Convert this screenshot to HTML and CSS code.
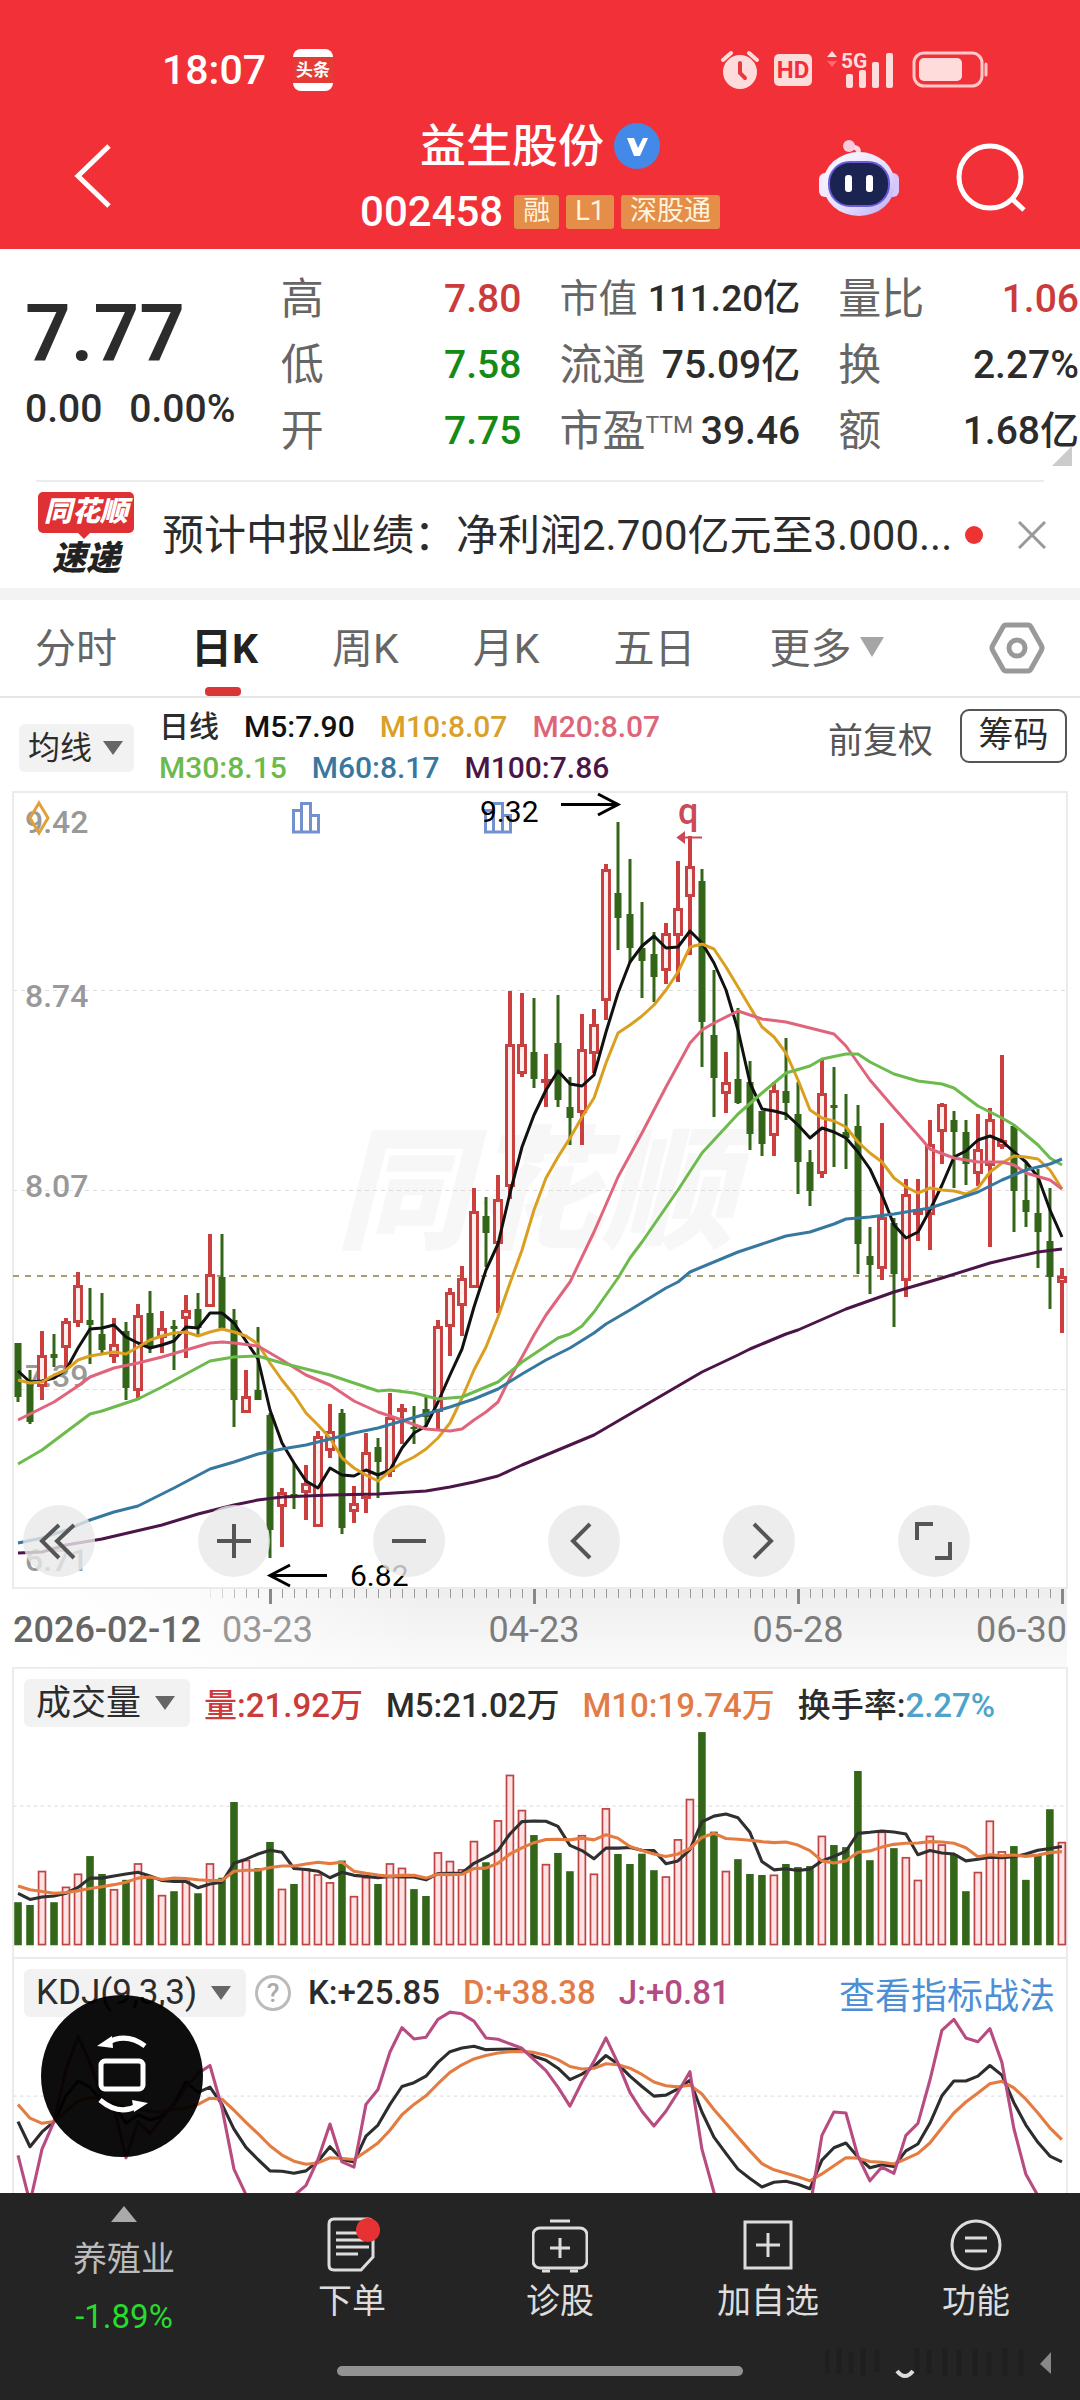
FILE: index.html
```html
<!DOCTYPE html>
<html lang="zh-CN">
<head>
<meta charset="utf-8">
<meta name="viewport" content="width=device-width, initial-scale=1">
<title>益生股份 002458</title>
<link rel="stylesheet" href="styles.css">
</head>
<body>
<header class="top">
  <div class="status">
    <span class="status-time">18:07</span>
    <span class="status-app"><span>头条</span></span>
    <div class="status-icons">
      <svg width="38" height="40" viewBox="0 0 38 40" aria-label="闹钟"><circle cx="19" cy="22" r="17" fill="#ffdcdc"/><path d="M2 10 10 3M36 10 28 3" stroke="#ffdcdc" stroke-width="4" stroke-linecap="round"/><path d="M19 13v10l5 5" stroke="#e8393f" stroke-width="4" fill="none" stroke-linecap="round"/></svg>
      <span class="hd">HD</span>
      <svg class="signal" width="70" height="40" viewBox="0 0 70 40" aria-label="5G"><path d="M0 7 5 1l5 6z" fill="#ffdcdc"/><path d="M0 11h10l-5 6z" fill="#ff6a6e"/><text x="14" y="18" font-size="21" font-weight="700" fill="#ffdcdc">5G</text><g fill="#ffdcdc"><rect x="19" y="24" width="7" height="14" rx="2"/><rect x="32" y="20" width="7" height="18" rx="2"/><rect x="45" y="12" width="7" height="26" rx="2"/><rect x="59" y="3" width="7" height="35" rx="2"/></g></svg>
      <svg width="78" height="38" viewBox="0 0 78 38" aria-label="电量"><rect x="2" y="2" width="68" height="33" rx="10" fill="none" stroke="#ffc9ca" stroke-width="3"/><rect x="7" y="7" width="43" height="23" rx="5" fill="#ffdcdc"/><path d="M74 13v11" stroke="#ffc9ca" stroke-width="3" stroke-linecap="round"/></svg>
    </div>
  </div>
  <div class="nav">
    <button class="icon-btn back" aria-label="返回"><svg width="38" height="64" viewBox="0 0 38 64"><path d="M35 2 4 32l31 30" fill="none" stroke="#fff" stroke-width="5"/></svg></button>
    <div class="title">
      <h1>益生股份 <svg width="46" height="46" viewBox="0 0 46 46" aria-label="认证"><circle cx="23" cy="23" r="23" fill="#4389e8"/><path d="M13 15h7l4 10 5-10h5l-8 18h-6z" fill="#fff"/></svg></h1>
      <div class="code"><span class="code-num">002458</span><span class="tag">融</span><span class="tag">L1</span><span class="tag">深股通</span></div>
    </div>
    <div class="nav-actions">
      <button class="icon-btn" aria-label="助手"><svg width="82" height="78" viewBox="0 0 82 78">
        <defs><linearGradient id="shell" x1="0" y1="0" x2="1" y2="1"><stop offset="0" stop-color="#fff"/><stop offset=".6" stop-color="#e3dcff"/><stop offset="1" stop-color="#b9a5f2"/></linearGradient></defs>
        <path d="M39 17c3-7 1-8-5-9" fill="none" stroke="#f7d9ea" stroke-width="5"/><circle cx="31" cy="7" r="6" fill="#f9c9dc"/>
        <rect x="1" y="34" width="12" height="24" rx="6" fill="#f3eaff"/><rect x="69" y="34" width="12" height="24" rx="6" fill="#d6c8fb"/>
        <ellipse cx="41" cy="45" rx="36" ry="32" fill="url(#shell)"/><rect x="11" y="23" width="60" height="44" rx="21" fill="#1b2450" stroke="#6a5bd8" stroke-width="2"/>
        <rect x="27" y="36" width="7" height="17" rx="3" fill="#fff"/><rect x="48" y="36" width="7" height="17" rx="3" fill="#fff"/></svg></button>
      <button class="icon-btn" aria-label="搜索"><svg width="72" height="70" viewBox="0 0 72 70"><circle cx="36" cy="34" r="31" fill="none" stroke="#fff" stroke-width="5"/><path d="m57 55 13 12" stroke="#fff" stroke-width="5"/></svg></button>
    </div>
  </div>
</header>

<main>
  <section class="quote">
    <div class="price"><strong>7.77</strong><div><span>0.00</span><span>0.00%</span></div></div>
    <dl class="stats">
      <div><dt>高</dt><dd class="up">7.80</dd></div>
      <div><dt>低</dt><dd class="down">7.58</dd></div>
      <div><dt>开</dt><dd class="down">7.75</dd></div>
    </dl>
    <dl class="stats">
      <div><dt class="tight">市值</dt><dd class="long">111.20亿</dd></div>
      <div><dt>流通</dt><dd>75.09亿</dd></div>
      <div><dt>市盈<sup>TTM</sup></dt><dd>39.46</dd></div>
    </dl>
    <dl class="stats">
      <div><dt>量比</dt><dd class="up">1.06</dd></div>
      <div><dt>换</dt><dd>2.27%</dd></div>
      <div><dt>额</dt><dd>1.68亿</dd></div>
    </dl>
    <span class="corner"></span>
  </section>

  <section class="notice">
    <div class="brand"><span class="brand-top">同花顺</span><span class="brand-bottom">速递</span></div>
    <a href="#" class="notice-text">预计中报业绩：净利润2.700亿元至3.000...</a>
    <span class="dot"></span>
    <button class="icon-btn" aria-label="关闭"><svg width="28" height="28" viewBox="0 0 28 28"><path d="m1 1 26 26M27 1 1 27" stroke="#999" stroke-width="3"/></svg></button>
  </section>

  <nav class="tabs">
    <button>分时</button>
    <button class="active">日K</button>
    <button>周K</button>
    <button>月K</button>
    <button>五日</button>
    <button aria-haspopup="menu">更多<i class="caret"></i></button>
    <button class="gear" aria-label="设置"><svg width="56" height="52" viewBox="0 0 56 52"><path d="M17 3h22q2 0 3 2l10 18q2 3 0 6L42 47q-1 2-3 2H17q-2 0-3-2L4 29q-2-3 0-6L14 5q1-2 3-2z" fill="none" stroke="#999" stroke-width="5"/><circle cx="28" cy="26" r="8" fill="none" stroke="#999" stroke-width="5"/></svg></button>
  </nav>

  <section class="ma-bar">
    <label class="picker small"><select aria-label="主图指标"><option>均线</option></select></label>
    <div class="ma-legend">
      <div><span>日线</span><span class="m5">M5:7.90</span><span class="m10">M10:8.07</span><span class="m20">M20:8.07</span></div>
      <div><span class="m30">M30:8.15</span><span class="m60">M60:8.17</span><span class="m100">M100:7.86</span></div>
    </div>
    <button class="plain">前复权</button>
    <button class="outlined">筹码</button>
  </section>

  <section class="chart">
    <svg id="kline" viewBox="0 790 1080 877" role="img" aria-label="日K线图">
      <defs>
        <linearGradient id="axisV" x1="0" y1="0" x2="0" y2="1"><stop offset="0" stop-color="#eeeeee"/><stop offset="1" stop-color="#fafafa"/></linearGradient>
        <linearGradient id="axisH" x1="0" y1="0" x2="1" y2="0"><stop offset="0" stop-color="#fff"/><stop offset=".18" stop-color="#fff" stop-opacity=".8"/><stop offset=".4" stop-color="#fff" stop-opacity="0"/></linearGradient>
      </defs>
      <text class="watermark" x="336" y="1238">同花顺</text>
      <rect x="0" y="1588" width="1067" height="79" fill="url(#axisV)"/>
      <rect x="0" y="1588" width="1067" height="79" fill="url(#axisH)"/>
      <path class="grid" d="M13 990.5H1067M13 1190.5H1067M13 1389.5H1067"/>
      <rect class="frame" x="13" y="792" width="1054" height="796"/>
      <path class="last-price" d="M13 1276H1067"/>
      <g class="axis">
        <text x="25" y="833">9.42</text><text x="25" y="1007">8.74</text><text x="25" y="1197">8.07</text><text x="25" y="1387">7.39</text><text x="25" y="1571">6.71</text>
      </g>
      <path d="M39 803 48 818 39 833 30 818z" fill="none" stroke="#e0a13c" stroke-width="3"/>
      <g fill="none" stroke="#7390cf" stroke-width="3"><path id="bars" d="M293.500 832V810.500H301.500V832M301.500 832V803.500H310.500V832M310.500 832V815.500H318.500V832M292 832H320"/><use href="#bars" x="192"/></g>
      <g id="ticks"></g>
      <g id="candles"></g>
      <g id="mas"></g>
      <g class="mark"><text x="480" y="822">9.32</text><text x="350" y="1586">6.82</text>
        <path d="M561 804.500H618M598 794 618 804.500 598 815M327 1575.500H270M290 1565 270 1575.500 290 1586"/></g>
      <text x="678" y="824" class="q">q</text><path d="M702 837.500H682M684 833 678 837.500 684 842z" stroke="#cb4a58" stroke-width="2" fill="#cb4a58"/>
      <g class="dates"><text class="from" x="13" y="1642">2026-02-12</text><text class="faded" x="222" y="1642">03-23</text><text x="534" y="1642" text-anchor="middle">04-23</text><text x="798" y="1642" text-anchor="middle">05-28</text><text x="1067" y="1642" text-anchor="end">06-30</text></g>
    </svg>
    <div class="tools">
      <button aria-label="最早"><svg viewBox="0 0 72 72"><path d="M36 20 19 36l17 17M51 20 34 36l17 17"/></svg></button>
      <button aria-label="放大"><svg viewBox="0 0 72 72"><path d="M36 19v34M19 36h34"/></svg></button>
      <button aria-label="缩小"><svg viewBox="0 0 72 72"><path d="M19 36h34"/></svg></button>
      <button aria-label="向左"><svg viewBox="0 0 72 72"><path d="M42 19 25 36l17 17"/></svg></button>
      <button aria-label="向右"><svg viewBox="0 0 72 72"><path d="m31 19 17 17-17 17"/></svg></button>
      <button aria-label="全屏"><svg viewBox="0 0 72 72"><path d="M19 35V19h16M52 37v16H37"/></svg></button>
    </div>
  </section>

  <section class="sub">
    <svg id="volume" viewBox="0 20 3136 842" role="img" aria-label="成交量"><path class="frame" d="M38 862V22H3098V862"/><path class="grid" d="M38 424H3098"/></svg>
    <div class="sub-head">
      <label class="picker"><select aria-label="副图一"><option>成交量</option></select></label>
      <span class="up">量:21.92万</span><span>M5:21.02万</span><span class="orange">M10:19.74万</span><span>换手率:<b class="cyan">2.27%</b></span>
    </div>
  </section>

  <section class="sub">
    <svg id="kdj" viewBox="0 862 3136 686" role="img" aria-label="KDJ"><path class="frame" d="M38 1548V865H3098V1548"/><path class="grid" d="M38 1266H3098"/></svg>
    <div class="sub-head">
      <label class="picker wide"><select aria-label="副图二"><option>KDJ(9,3,3)</option></select></label>
      <button class="help" aria-label="说明">?</button>
      <span>K:+25.85</span><span class="orange">D:+38.38</span><span class="magenta">J:+0.81</span>
      <a href="#">查看指标战法</a>
    </div>
    <button class="rotate" aria-label="横屏"><svg width="60" height="84" viewBox="0 0 60 84"><g fill="none" stroke="#fff" stroke-width="5"><rect x="9" y="27" width="42" height="28" rx="4"/><path d="M53 12Q34-2 15 9"/><path d="M8 66Q27 82 45 72"/></g><path d="M5 12 20 2 21 14zM56 69 40 66 42 78z" fill="#fff"/></svg></button>
  </section>
</main>

<footer class="bottom">
  <div class="bar">
    <button class="sector"><i></i><span>养殖业</span><b>-1.89%</b></button>
    <button><svg width="56" height="56" viewBox="0 0 56 56"><path d="M10 2h34q5 0 5 5v33L37 53H10q-5 0-5-5V7q0-5 5-5z"/><path d="M12 16h28M12 23h28M12 30h33M12 37h22"/><circle cx="44" cy="13" r="12" class="badge"/></svg><span>下单</span></button>
    <button><svg width="56" height="56" viewBox="0 0 56 56"><rect x="1" y="11" width="54" height="40" rx="7"/><path d="M18 4h20M28 21v20M18 31h20M10 54h8M38 54h8"/></svg><span>诊股</span></button>
    <button><svg width="56" height="56" viewBox="0 0 56 56"><rect x="5" y="5" width="46" height="46"/><path d="M28 16v24M16 28h24"/></svg><span>加自选</span></button>
    <button><svg width="56" height="56" viewBox="0 0 56 56"><circle cx="28" cy="28" r="24"/><path d="M17 21h22M17 34h22"/></svg><span>功能</span></button>
  </div>
  <div class="home"></div>
  <svg class="smudge" width="232" height="36" viewBox="0 0 232 36" aria-hidden="true"><path d="M2 6v24M14 4v26M26 8v22M38 4v28M52 6v22M92 4v26M104 6v24M120 4v28M134 6v26M150 5v27M164 8v24M180 4v28M196 6v26" stroke="#1f1f1f" stroke-width="5"/><path d="M72 27q8 10 16 0" stroke="#ddd" stroke-width="4" fill="none"/><path d="m226 8-11 12 11 10z" fill="#888"/></svg>
</footer>
<script src="chart.js"></script>
</body>
</html>
```
FILE: styles.css
```css
* { box-sizing: border-box; }
body { margin: 0; background: #fff; color: #2c2c2c; font-family: Roboto, "Noto Sans CJK SC", sans-serif; font-size: 34px; }
button, select { font: inherit; color: inherit; background: none; border: 0; padding: 0; margin: 0; }
a { color: inherit; text-decoration: none; }
svg { display: block; }
.icon-btn { flex: none; }
.up { color: #cb3b3b; }
.down { color: #158a15; }
.orange { color: #e27b46; }
.cyan { color: #4da3cb; }
.magenta { color: #b34c80; }

/* header */
.top { background: #f23037; color: #fff; height: 249px; }
.status { display: flex; align-items: center; padding: 42px 90px 0 162px; height: 98px; }
.status-time { font-size: 41px; font-weight: 500; }
.status-app { margin-left: 27px; width: 40px; height: 42px; border-radius: 8px; background: #fff; display: flex; align-items: center; }
.status-app span { width: 100%; height: 26px; line-height: 26px; background: #e33b35; font-size: 17px; text-align: center; font-weight: 700; }
.status-icons { margin-left: auto; display: flex; align-items: center; gap: 15px; }
.signal { overflow: visible; }
.hd { width: 38px; height: 32px; border-radius: 5px; background: #ffdcdc; color: #f23037; font-size: 24px; line-height: 32px; font-weight: 700; text-align: center; }
.nav { display: grid; grid-template-columns: 1fr auto 1fr; align-items: center; padding: 0 54px; height: 151px; }
.title { padding-top: 10px; }
.title h1 { margin: 0; display: flex; align-items: center; justify-content: center; gap: 10px; font-size: 46px; line-height: 60px; font-weight: 500; }
.code { display: flex; align-items: center; gap: 7px; height: 66px; padding-top: 6px; }
.code-num { font-size: 42px; font-weight: 500; margin-right: 4px; }
.tag { height: 34px; line-height: 33px; padding: 0 9px; border-radius: 3px; background: #e48e4a; color: #fff3dc; font-size: 27px; }
.nav-actions { display: flex; gap: 54px; justify-content: flex-end; align-items: center; padding-top: 8px; }
.back { justify-self: start; padding: 4px 0 0 20px; }

/* quote */
.quote { position: relative; display: grid; grid-template-columns: 217fr 240fr 240fr 240fr; gap: 38px; height: 231px; padding: 17px 1px 0 25px; }
.price strong { display: block; margin-top: 16px; font-size: 80px; line-height: 104px; font-weight: 600; }
.price div { display: flex; gap: 27px; margin-top: -2px; font-size: 39px; line-height: 50px; font-weight: 500; }
.stats { margin: 0; }
.stats div { display: flex; justify-content: space-between; align-items: center; height: 66px; white-space: nowrap; }
.stats dt { font-size: 43px; line-height: 60px; color: #666; }
.stats .tight { font-size: 39px; }
.stats sup { font-size: 23px; line-height: 20px; vertical-align: 13px; }
.stats dd { margin: 0; font-size: 39px; line-height: 60px; font-weight: 500; }
.stats .long { font-size: 37px; }
.corner { position: absolute; right: 8px; bottom: 14px; border-left: 20px solid transparent; border-bottom: 20px solid #ccc; }

/* notice */
.notice { position: relative; display: flex; align-items: center; height: 120px; padding: 2px 34px 10px 37px; border-bottom: 12px solid #f3f3f3; }
.notice::before { content: ""; position: absolute; top: 0; left: 36px; right: 36px; border-top: 2px solid #ececec; }
.brand { width: 98px; margin-right: 27px; padding-top: 10px; display: flex; flex-direction: column; align-items: center; font-weight: 900; font-style: italic; }
.brand-top { position: relative; width: 96px; height: 41px; line-height: 40px; border-radius: 5px; background: #df3033; color: #fff; font-size: 28px; text-align: center; }
.brand-top::after { content: ""; position: absolute; left: 40px; top: 41px; border: 6px solid transparent; border-top-color: #df3033; border-bottom: 0; }
.brand-bottom { font-size: 34px; line-height: 42px; color: #222; margin-top: 4px; }
.notice-text { flex: 1; font-size: 42px; line-height: 60px; white-space: nowrap; padding-top: 12px; }
.dot { width: 18px; height: 18px; border-radius: 9px; background: #e33; margin: 10px 35px 0 0; }
.notice .icon-btn { padding-top: 10px; }

/* tabs */
.tabs { display: flex; align-items: center; gap: 74px; height: 98px; padding: 0 35px; border-bottom: 2px solid #e5e5e5; color: #666; }
.tabs button { position: relative; height: 96px; font-size: 41px; line-height: 98px; white-space: nowrap; }
.tabs .gear { margin-left: auto; }
.tabs .active { color: #222; font-weight: 700; }
.tabs .active::after { content: ""; position: absolute; left: 50%; bottom: 0; width: 36px; height: 9px; margin-left: -20px; border-radius: 4px; background: #d93636; }
.caret { display: inline-block; margin-left: 8px; vertical-align: 6px; border: 12px solid transparent; border-top: 20px solid #a5a5a5; border-bottom: 0; }

/* moving averages */
.ma-bar { display: flex; align-items: flex-start; height: 92px; padding: 0 13px 0 19px; }
.picker { position: relative; display: block; width: 166px; height: 48px; border-radius: 6px; background: #f2f2f2; }
.picker select { width: 100%; height: 100%; padding-left: 12px; appearance: none; font-size: 35px; }
.picker::after { content: ""; position: absolute; right: 15px; top: 17px; border: 10px solid transparent; border-top: 14px solid #666; border-bottom: 0; pointer-events: none; }
.picker.small { width: 115px; margin-top: 26px; }
.picker.small select { font-size: 32px; padding-left: 9px; }
.picker.small::after { right: 11px; }
.picker.wide { width: 222px; }
.ma-legend { flex: 1; margin: 8px 0 0 25px; font-size: 30px; line-height: 41px; font-weight: 500; }
.ma-legend div { display: flex; gap: 25px; }
.m5 { color: #111; } .m10 { color: #d9a02a; } .m20 { color: #de6478; } .m30 { color: #6cba4c; } .m60 { color: #38779f; } .m100 { color: #4a1648; }
.plain { margin: 18px 27px 0 0; font-size: 35px; line-height: 52px; color: #555; }
.outlined { margin-top: 11px; width: 107px; height: 54px; border: 2px solid #555; border-radius: 9px; font-size: 35px; line-height: 50px; }

/* main chart */
.chart { position: relative; }
.chart > svg, .sub > svg { width: 100%; height: auto; }
#kline { overflow: visible; }
.frame { fill: none; stroke: #ebebeb; stroke-width: 2; }
.grid { fill: none; stroke: #ddd; stroke-width: 1; stroke-dasharray: 4 4; }
.last-price { stroke: #a8a06c; stroke-width: 2; stroke-dasharray: 6 6; }
.watermark { font-size: 133px; font-weight: 900; font-style: italic; fill: #f7f7f7; }
.axis { font-size: 32px; font-weight: 500; fill: #999; }
.mark { font-size: 30px; fill: #000; }
.mark path { fill: none; stroke: #000; stroke-width: 3; }
.q { font-size: 36px; font-weight: 500; fill: #cb4a58; }
.dates { font-size: 36px; fill: #7c7c7c; }
.dates .from { fill: #666; font-weight: 500; }
.dates .faded { fill: #999; }
.wick-r { stroke: #cd3f3f; stroke-width: 4; }
.wick-g { stroke: #34661a; stroke-width: 3; }
.body-r { fill: #fff0f0; stroke: #c84141; stroke-width: 3; }
.body-g { fill: #34661a; }
.vol-r { fill: #ffe2e3; stroke: #bf4444; stroke-width: 5; }
.vol-g { fill: #34661a; }
.line { fill: none; stroke-width: 3; stroke-linejoin: round; }
.tools { position: absolute; left: 23px; right: 110px; bottom: 90px; display: flex; justify-content: space-between; }
.tools button { width: 72px; height: 72px; border-radius: 36px; background: rgba(233, 233, 233, 0.8); }
.tools path { fill: none; stroke: #555; stroke-width: 4; }

/* sub charts */
.sub { position: relative; display: grid; }
.sub > svg, .sub-head { grid-area: 1 / 1; }
.sub .frame { stroke-width: 6; }
.sub .grid { stroke-width: 4; stroke-dasharray: 10 10; stroke: #e2e2e2; }
.sub .line { stroke-width: 9; }
.sub-head { display: flex; align-self: start; align-items: center; gap: 23px; padding: 12px 25px 0 24px; height: 60px; font-size: 33px; font-weight: 500; white-space: nowrap; }
.sub-head .picker { font-weight: 400; margin-right: -9px; }
.sub-head b { font-weight: 500; }
.sub-head a { margin-left: auto; font-size: 36px; font-weight: 400; color: #4c8fd6; }
.help { width: 36px; height: 36px; border: 3px solid #bbb; border-radius: 18px; color: #aaa; font-size: 26px; line-height: 30px; margin: 0 -6px 0 -5px; }
.rotate { position: absolute; left: 41px; top: 38px; width: 162px; height: 162px; border-radius: 81px; background: rgba(0, 0, 0, 0.95); display: grid; place-items: center; }

/* bottom bar */
.bottom { position: relative; background: #242424; color: #ddd; height: 207px; }
.bar { display: grid; grid-template-columns: 248fr 208fr 208fr 208fr 208fr; height: 150px; }
.bar button { display: flex; flex-direction: column; align-items: center; padding-top: 24px; font-size: 34px; line-height: 50px; }
.bar button span { margin-top: 3px; }
.bar svg { fill: none; stroke: #ddd; stroke-width: 3; }
.bar .badge { fill: #e63232; stroke: none; }
.bar .sector { padding-top: 13px; }
.sector i { border: 13px solid transparent; border-bottom: 16px solid #aaa; border-top: 0; }
.bar .sector span { margin-top: 12px; color: #bbb; }
.sector b { margin-top: 8px; font-size: 33px; font-weight: 400; color: #26dc2c; }
.home { width: 406px; height: 10px; margin: 23px auto 0; border-radius: 5px; background: #929292; }
.smudge { position: absolute; right: 23px; bottom: 20px; }
```
FILE: chart.js
```js
// Each candle: direction, high, body top, body bottom, low (chart units).
const candles = `g 1343 1343 1397 1402|g 1370 1380 1422 1424|r 1331 1355 1387 1400|g 1334 1354 1358 1367|r 1318 1321 1348 1367|r 1272 1285 1323 1327|g 1288 1320 1325 1364|g 1293 1334 1350 1353|r 1318 1344 1357 1363|g 1322 1331 1388 1400|r 1304 1315 1391 1400|g 1291 1313 1348 1353|r 1311 1328 1338 1353|g 1320 1326 1329 1370|r 1295 1310 1319 1358|g 1293 1309 1328 1335|r 1234 1274 1307 1307|g 1234 1277 1328 1328|g 1309 1320 1400 1427|r 1370 1396 1413 1413|g 1327 1390 1400 1400|g 1413 1415 1530 1558|r 1488 1492 1507 1547|g 1463 1494 1496 1509|r 1465 1483 1493 1520|r 1431 1436 1527 1527|r 1404 1431 1451 1458|g 1409 1413 1528 1534|r 1486 1503 1512 1523|r 1433 1452 1499 1513|g 1438 1447 1462 1498|r 1393 1417 1472 1477|r 1404 1408 1411 1444|g 1406 1427 1429 1444|g 1395 1409 1417 1427|r 1320 1326 1412 1430|r 1288 1292 1327 1356|r 1266 1278 1306 1336|r 1188 1211 1288 1288|g 1197 1216 1233 1267|r 1175 1199 1244 1313|r 991 1044 1187 1199|r 993 1044 1074 1077|g 998 1052 1079 1088|r 1054 1079 1083 1107|g 995 1043 1100 1107|g 1077 1107 1118 1145|r 1014 1049 1113 1145|r 1009 1024 1054 1073|r 864 869 1001 1020|g 822 893 918 950|g 859 914 948 963|g 902 948 961 998|g 932 954 977 1002|r 923 933 971 984|r 861 908 936 982|r 836 866 897 955|g 869 881 1022 1067|g 970 1035 1078 1117|r 1052 1082 1094 1113|g 1008 1079 1103 1104|g 1061 1082 1134 1150|g 1111 1111 1144 1156|r 1082 1090 1136 1156|g 1038 1091 1103 1120|g 1082 1114 1162 1194|g 1150 1162 1191 1206|r 1059 1093 1174 1178|g 1067 1105 1108 1167|g 1094 1132 1138 1169|g 1105 1126 1244 1274|g 1227 1256 1265 1294|r 1123 1217 1269 1280|g 1218 1223 1274 1327|r 1179 1194 1281 1297|r 1179 1209 1215 1241|r 1120 1144 1215 1250|r 1103 1104 1132 1164|g 1111 1120 1132 1188|g 1120 1132 1164 1185|r 1114 1149 1174 1186|r 1108 1119 1166 1247|r 1055 1140 1147 1149|g 1125 1126 1191 1232|g 1163 1200 1212 1227|g 1169 1213 1232 1268|g 1188 1241 1277 1309|r 1268 1276 1283 1333`
  .split('|').map(s => s.split(' ').map((v, i) => i ? +v : v));

// Moving averages as day:position pairs.
const averages = [
  ['#4b1548', '0:1553 2:1552 4:1545 7:1539 12:1525 15:1514 18:1505 20:1500 22:1497 26:1495 30:1494 34:1491 36:1487 38:1482 40:1476 42:1465 44:1455 48:1435 50:1421 51:1414 54:1393 57:1372 60:1355 61:1349 64:1334 65:1330 69:1309 73:1292 77:1278 81:1263 85:1252 87:1249'],
  ['#111', '0:1371 1:1382 2:1381 3:1378 4:1370 5:1348 6:1329 7:1328 8:1325 9:1337 10:1343 11:1348 12:1345 13:1341 14:1327 15:1328 16:1313 17:1313 18:1323 19:1341 20:1359 21:1410 22:1443 23:1463 24:1481 25:1488 26:1468 27:1475 28:1476 29:1470 30:1475 31:1470 32:1448 33:1433 34:1426 35:1402 36:1375 37:1349 38:1307 39:1270 40:1244 41:1193 42:1147 43:1115 44:1090 45:1071 46:1084 47:1086 48:1075 49:1032 50:993 51:962 52:946 53:936 54:948 55:947 56:931 57:943 58:963 59:990 60:1030 61:1083 62:1109 63:1111 64:1114 65:1125 66:1138 67:1128 68:1132 69:1138 70:1152 71:1169 72:1195 73:1225 74:1238 75:1232 76:1210 77:1185 78:1157 79:1151 80:1140 81:1136 82:1141 83:1152 84:1162 85:1177 86:1210 87:1237'],
  ['#db9f20', '0:1380 1:1383 2:1382 3:1375 4:1370 5:1360 6:1356 7:1354 8:1352 9:1354 10:1347 11:1340 12:1336 13:1333 14:1332 15:1336 16:1332 17:1329 18:1332 19:1336 20:1344 21:1363 22:1380 23:1395 24:1413 25:1425 26:1438 27:1458 28:1468 29:1475 30:1481 31:1471 32:1463 33:1457 34:1449 35:1438 36:1423 37:1398 38:1370 39:1347 40:1317 41:1283 42:1250 43:1210 44:1178 45:1157 46:1138 47:1117 48:1098 49:1063 50:1033 51:1025 52:1016 53:1005 54:990 55:972 56:947 57:944 58:949 59:967 60:987 61:1007 62:1027 63:1037 64:1053 65:1080 66:1110 67:1118 68:1121 69:1127 70:1142 71:1153 72:1162 73:1178 74:1187 75:1193 76:1188 77:1190 78:1191 79:1194 80:1188 81:1172 82:1163 83:1156 84:1157 85:1159 86:1170 87:1189'],
  ['#e0657c', '0:1420 3:1402 5:1386 6:1377 8:1368 10:1363 12:1357 14:1350 16:1343 17:1342 18:1343 20:1346 22:1360 24:1375 26:1385 28:1401 30:1412 32:1420 34:1429 36:1431 37:1429 38:1420 39:1412 40:1402 41:1378 42:1357 43:1335 44:1315 46:1282 48:1232 50:1177 52:1133 54:1087 56:1043 57:1030 58:1023 60:1011 61:1015 62:1019 64:1022 66:1028 68:1034 69:1046 71:1080 73:1108 75:1135 76:1149 78:1158 80:1162 82:1162 83:1165 84:1173 86:1180 87:1189'],
  ['#6cbb4c', '0:1464 2:1450 4:1432 6:1414 7:1411 10:1399 12:1387 14:1374 16:1361 18:1357 20:1356 22:1363 24:1369 26:1375 28:1383 30:1391 31:1390 33:1393 35:1399 37:1397 38:1392 40:1382 42:1362 44:1346 45:1338 46:1334 47:1326 48:1312 50:1278 51:1258 52:1242 55:1190 57:1153 60:1114 62:1093 64:1073 66:1066 67:1059 69:1054 70:1054 71:1062 73:1074 75:1081 77:1084 78:1088 80:1106 82:1118 83:1125 84:1135 85:1145 86:1158 87:1165'],
  ['#36789f', '0:1543 2:1538 4:1530 6:1520 8:1512 10:1506 13:1488 16:1469 18:1462 20:1454 22:1449 24:1445 26:1439 28:1433 30:1428 32:1421 34:1414 36:1407 38:1399 40:1389 42:1374 44:1360 46:1348 48:1333 49:1324 51:1310 54:1288 55:1282 56:1272 60:1252 64:1236 66:1232 68:1224 69:1219 71:1217 73:1214 76:1208 78:1200 80:1192 82:1180 84:1170 86:1164 87:1159'],
];

const volumeTops = [703,711,612,703,658,620,569,621,665,638,590,630,682,671,640,677,590,632,412,580,604,528,664,650,605,622,645,582,685,630,650,590,603,665,685,558,583,607,525,587,465,333,435,508,592,560,613,508,620,430,563,592,562,610,628,520,403,209,498,612,578,621,624,623,592,601,598,510,537,543,322,581,498,546,572,638,510,535,563,671,615,466,555,540,638,563,433,528];
const volumeLines = [
  ['#303030', [677,695,688,685,677,660,633,633,627,621,616,627,640,643,643,661,650,645,590,578,563,552,558,605,608,613,632,616,625,628,632,628,630,630,638,620,619,618,590,573,553,505,469,467,468,483,538,553,577,546,546,544,552,553,591,583,550,470,453,447,458,500,585,609,606,611,607,583,570,555,503,500,496,499,505,565,553,560,563,583,578,572,574,571,563,552,547,541]],
  ['#e47c42', [656,667,672,677,675,670,663,658,652,645,633,630,637,633,634,638,640,640,613,610,610,602,598,598,592,587,591,587,613,619,624,628,625,625,633,622,623,622,605,604,590,563,545,530,521,520,522,517,522,507,517,541,553,563,570,563,547,515,503,518,520,523,527,530,528,537,553,583,589,583,558,554,543,535,532,531,527,528,532,545,571,565,568,566,570,566,559,556]],
];
const kdjLines = [
  ['#2d2d2d', [1340,1413,1370,1340,1265,1222,1240,1280,1290,1345,1320,1335,1325,1290,1225,1255,1240,1290,1362,1415,1450,1483,1484,1490,1483,1455,1413,1450,1457,1382,1350,1290,1238,1227,1208,1168,1137,1126,1121,1131,1130,1129,1132,1150,1162,1185,1218,1202,1180,1148,1173,1208,1238,1266,1263,1245,1220,1312,1385,1432,1478,1505,1530,1516,1513,1522,1535,1452,1416,1402,1443,1474,1465,1470,1425,1405,1345,1265,1222,1222,1208,1177,1205,1285,1350,1400,1440,1457]],
  ['#e47c42', [1290,1330,1345,1340,1310,1280,1270,1275,1285,1300,1305,1310,1312,1305,1300,1290,1272,1275,1307,1342,1375,1410,1437,1455,1464,1460,1445,1447,1450,1427,1402,1365,1320,1290,1265,1230,1197,1175,1158,1148,1141,1137,1136,1139,1147,1160,1180,1187,1185,1172,1175,1185,1203,1225,1236,1239,1234,1260,1305,1345,1385,1425,1462,1480,1490,1500,1512,1492,1468,1445,1446,1456,1458,1463,1448,1432,1402,1358,1315,1283,1257,1230,1223,1242,1275,1315,1358,1392]],
  ['#b84c80', [1438,1575,1420,1340,1190,1092,1170,1270,1300,1445,1340,1375,1330,1290,1240,1200,1177,1300,1478,1552,1620,1640,1610,1555,1525,1450,1347,1457,1472,1290,1247,1138,1067,1100,1095,1043,1022,1027,1048,1097,1101,1114,1127,1160,1192,1240,1295,1225,1165,1097,1170,1255,1310,1353,1310,1255,1195,1420,1545,1640,1700,1700,1700,1700,1700,1700,1590,1380,1312,1315,1440,1512,1472,1490,1380,1345,1220,1075,1043,1097,1108,1070,1168,1360,1493,1555,1600,1640]],
];

const dayX = i => 18 + 12 * i;
const subX = i => 52.3 + 34.84 * i;
const append = (id, html) => document.getElementById(id).insertAdjacentHTML('beforeend', html);
const line = (color, points) => `<polyline class="line" stroke="${color}" points="${points.join(' ')}"/>`;

append('candles', candles.map(([dir, high, top, bottom, low], i) => {
  const x = dayX(i);
  const wick = `<path class="wick-${dir}" d="M${x} ${high}V${low}"/>`;
  const body = dir === 'g'
    ? `<rect class="body-g" x="${x - 3.5}" y="${top}" width="7" height="${bottom - top}"/>`
    : `<rect class="body-r" x="${x - 3.5}" y="${top + 1.5}" width="7" height="${Math.max(1, bottom - top - 3)}"/>`;
  return wick + body;
}).join(''));

append('mas', averages.map(([color, text]) =>
  line(color, text.split(' ').map(p => { const [i, y] = p.split(':'); return `${dayX(+i)},${y}`; }))).join(''));

let ticks = '';
for (let i = 16; i < 88; i++) {
  const major = i % 22 === 21;
  const fade = Math.min(1, (i - 15) / 5);
  ticks += `<path d="M${dayX(i) + 0.5} 1589v${major ? 15 : 9}" stroke="${major ? '#888' : '#999'}" stroke-width="${major ? 3 : 1}" opacity="${fade}"/>`;
}
append('ticks', ticks);

append('volume', volumeTops.map((top, i) => candles[i][0] === 'g'
  ? `<rect class="vol-g" x="${subX(i) - 11}" y="${top}" width="22" height="${828 - top}"/>`
  : `<rect class="vol-r" x="${subX(i) - 10}" y="${top + 2}" width="20" height="${824 - top}"/>`).join(''));
append('volume', volumeLines.map(([c, ys]) => line(c, ys.map((y, i) => `${subX(i)},${y}`))).join(''));
append('kdj', kdjLines.map(([c, ys]) => line(c, ys.map((y, i) => `${subX(i)},${y}`))).join(''));
```
